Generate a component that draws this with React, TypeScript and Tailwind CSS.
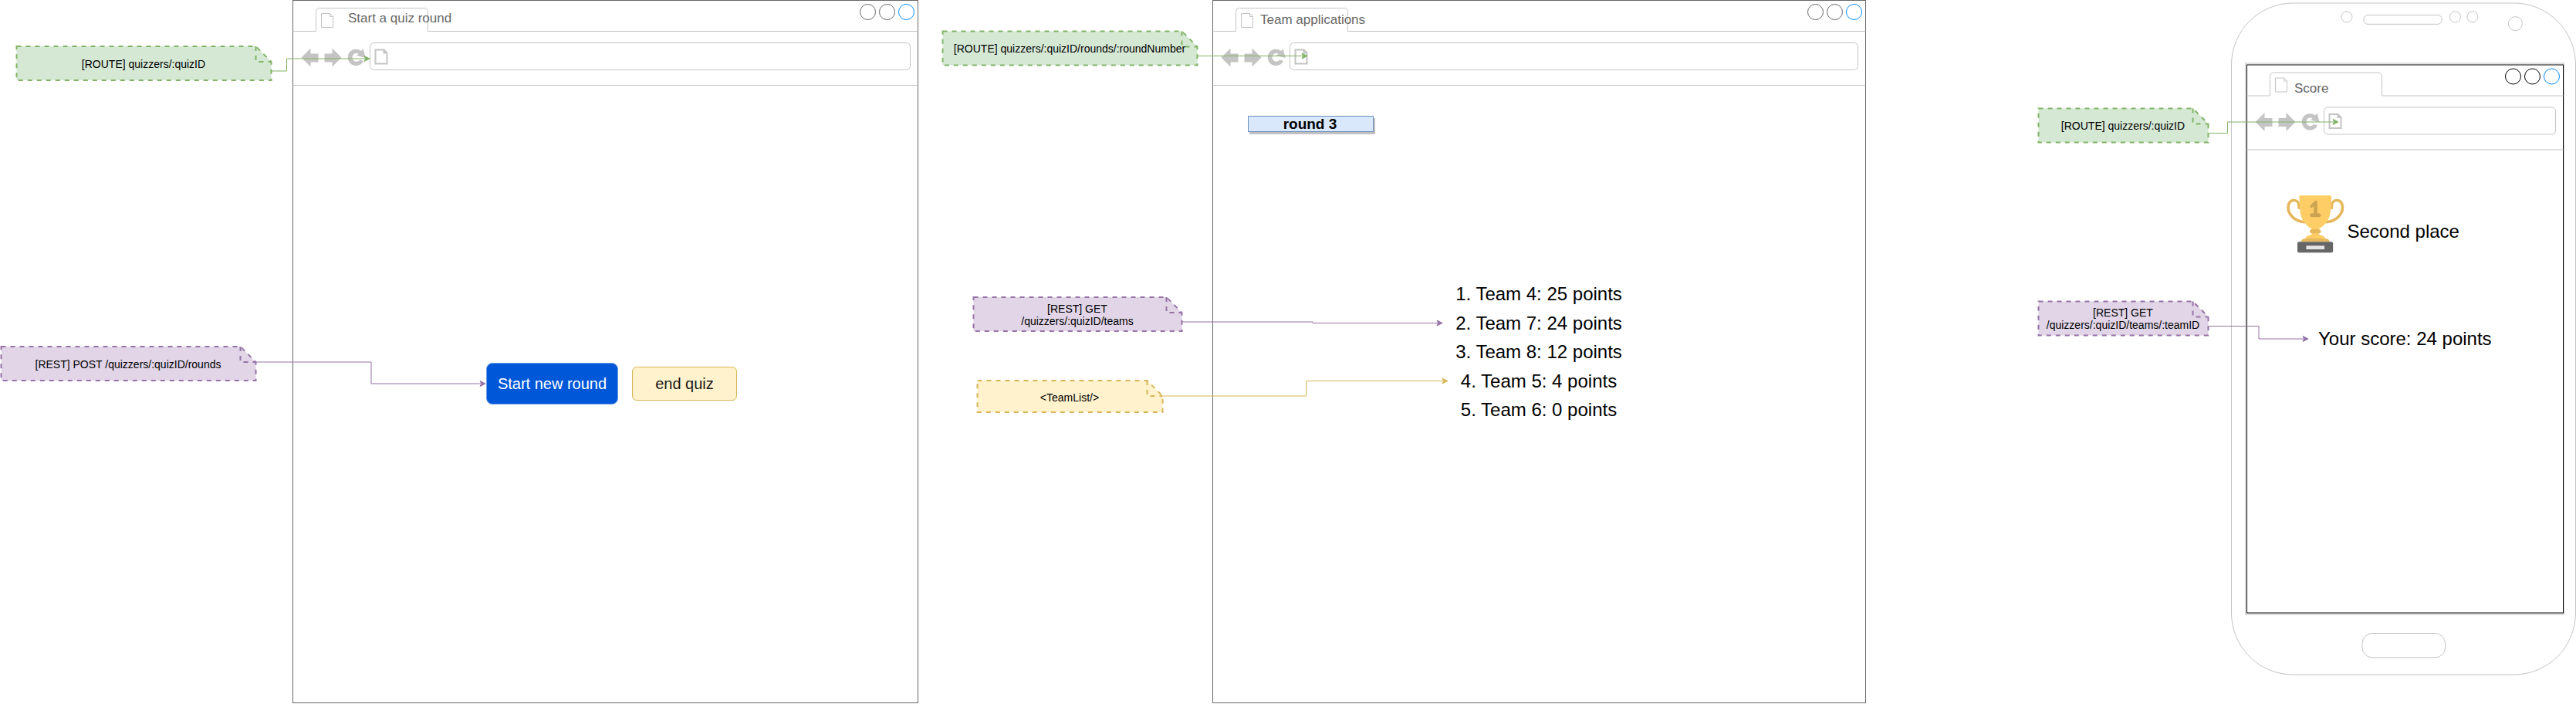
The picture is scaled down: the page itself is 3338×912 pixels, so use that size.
import React from "react";
import type { ReactNode } from "react";

type Tone = "green" | "purple" | "yellow";

const tones: Record<Tone, { fill: string; stroke: string }> = {
  green: { fill: "fill-[#d5e8d4]", stroke: "stroke-[#82b366]" },
  purple: { fill: "fill-[#e1d5e7]", stroke: "stroke-[#9673a6]" },
  yellow: { fill: "fill-[#fff2cc]", stroke: "stroke-[#d6b656]" },
};

const arrowFill: Record<Tone, string> = {
  green: "fill-[#82b366]",
  purple: "fill-[#9673a6]",
  yellow: "fill-[#d6b656]",
};

type NoteData = { x: number; y: number; w: number; h: number; tone: Tone; lines: string[]; half?: boolean };

/* Dashed annotation with a folded top-right corner, pinned on the canvas. */
function Note({ x, y, w, h, tone, lines, half }: NoteData) {
  const t = tones[tone];
  return (
    <div className="absolute flex items-center justify-center" style={{ left: x, top: y, width: w, height: h }}>
      <svg className="absolute inset-0 h-full w-full overflow-visible" aria-hidden="true">
        <g transform={half ? "translate(0.5 0.5)" : "translate(0.5 0)"} strokeWidth="2" strokeDasharray="6 6" className={t.stroke}>
          <path d={`M0 0H${w - 20}L${w} 20V${h}H0Z`} className={t.fill} />
          <path d={`M${w - 20} 0V20H${w}`} fill="none" />
        </g>
      </svg>
      <p className="relative pt-0.5 text-center text-[14px] leading-4">
        {lines.map((line) => (
          <span key={line} className="block">
            {line}
          </span>
        ))}
      </p>
    </div>
  );
}

const notes: NoteData[] = [
  { x: 21, y: 60, w: 330, h: 44, tone: "green", lines: ["[ROUTE] quizzers/:quizID"] },
  { x: 1, y: 449, w: 330, h: 44, tone: "purple", lines: ["[REST] POST /quizzers/:quizID/rounds"] },
  { x: 1221, y: 40, w: 330, h: 44, tone: "green", lines: ["[ROUTE] quizzers/:quizID/rounds/:roundNumber"], half: true },
  { x: 1261, y: 385, w: 270, h: 44, tone: "purple", lines: ["[REST] GET", "/quizzers/:quizID/teams"] },
  { x: 1266, y: 493, w: 240, h: 41, tone: "yellow", lines: ["<TeamList/>"] },
  { x: 2641, y: 140, w: 220, h: 44, tone: "green", lines: ["[ROUTE] quizzers/:quizID"], half: true },
  { x: 2641, y: 390, w: 220, h: 44, tone: "purple", lines: ["[REST] GET", "/quizzers/:quizID/teams/:teamID"], half: true },
];

/* Connector with a classic arrow head at its right end. */
function Connector({ d, tipX, tipY, tone }: { d: string; tipX: number; tipY: number; tone: Tone }) {
  return (
    <g className={tones[tone].stroke}>
      <path d={d} fill="none" />
      <path
        d={`M${tipX - 1} ${tipY}l-7 3.5l1.75 -3.5l-1.75 -3.5z`}
        className={arrowFill[tone]}
        strokeMiterlimit="10"
      />
    </g>
  );
}

/* Line drawing of a browser: tab, toolbar, address field and window buttons. */
function BrowserChrome({ w, h, dark }: { w: number; h: number; dark?: boolean }) {
  const edge = dark ? "stroke-black" : "stroke-[#666666]";
  return (
    <svg className="absolute inset-0 h-full w-full overflow-visible" fill="none" aria-hidden="true">
      <g transform={dark ? "translate(0.5 0)" : "translate(0.5 0.5)"}>
        <rect width={w} height={h} className={`fill-white ${edge}`} />
        <circle cx={w - 65} cy="15" r="10" className={edge} />
        <circle cx={w - 40} cy="15" r="10" className={edge} />
        <circle cx={w - 15} cy="15" r="10" className="stroke-[#008cff]" />
        <g className="stroke-[#c4c4c4]">
          <path d={`M0 40H30V15A5 5 0 0 1 35 10H170A5 5 0 0 1 175 15V40H${w}`} />
          <rect x="100" y="55" width={w - 110} height="35" rx="5" />
          <path d={`M0 110H${w}`} />
          <path d="M37 17H48L52 21V35H37ZM48 17V21H52" />
          <path d="M107 64H118L122 68V82H107ZM118 64V68H122" strokeWidth="2" />
        </g>
        <g className="fill-[#c4c4c4]">
          <path d="M11 74L23 62V69H33V80H23V86Z" />
          <path d="M41 69H51V62L63 74L51 86V80H41Z" />
          <path d="M91.5 78.5A10.7 10.7 0 1 1 88.5 65.5L91 62.5L94.2 74.5L82.5 71.5L85.2 69.2A5.4 5.4 0 1 0 86.8 77Z" />
        </g>
      </g>
    </svg>
  );
}

function WindowTitle({ className, children }: { className: string; children: ReactNode }) {
  return (
    <header className={`h-[110px] shrink-0 text-[17px] leading-none text-[#666666] ${className}`}>
      <h2>{children}</h2>
    </header>
  );
}

function Trophy() {
  return (
    <svg className="h-[74.5px] w-[74.5px] shrink-0" viewBox="69 38.5 223 223" aria-hidden="true">
      <g fill="none" stroke="#e6b85c" strokeWidth="11" strokeLinecap="round">
        <path d="M117 87V80C117 66 108 58 97 58C83 58 75 70 75 86C75 113 101 140 138 142" />
        <path d="M244 87V80C244 66 253 58 264 58C278 58 286 70 286 86C286 113 260 140 223 142" />
      </g>
      <path
        d="M118 43Q118 39 122 39H239Q243 39 243 43L240 98C238 128 222 151 194 169V190Q203 194 214 198L220 208H140L146 198Q158 194 167 190V169C139 151 123 128 121 98Z"
        fill="#ffcd66"
      />
      <rect x="159" y="170" width="43" height="16" rx="8" fill="#e6b85c" />
      <path d="M124 219Q128 206 143 206H218Q233 206 237 219Z" fill="#e6b85c" />
      <path
        d="M174 108V81L168 86Q162 89 160 83Q159 79 163 76L178 61Q181 58 185 59Q188 60 188 65V108H194Q202 109 202 115.500Q202 123 194 123H168Q159 123 159 115.500Q159 108 168 108Z"
        fill="#cca352"
      />
      <rect x="111" y="219" width="138" height="42" rx="6" fill="#666666" />
      <rect x="145" y="234" width="71" height="14" fill="#e6e6e6" />
    </svg>
  );
}

function PhoneOutline() {
  return (
    <svg className="absolute inset-0 h-full w-full" viewBox="2880 0 458 912" fill="none" stroke="#c4c4c4" aria-hidden="true">
      <rect x="2891.5" y="4" width="446" height="870" rx="80" />
      <rect x="2909.7" y="82" width="412.6" height="714" />
      <circle cx="3040.9" cy="21.8" r="7" />
      <rect x="3063" y="19.5" width="101" height="11.8" rx="5" />
      <circle cx="3181.4" cy="21.8" r="7" />
      <circle cx="3203.9" cy="21.8" r="7" />
      <circle cx="3259.4" cy="30.6" r="9" />
      <rect x="3061" y="820.5" width="107.5" height="31.3" rx="13" />
    </svg>
  );
}

const standings = [
  "1. Team 4: 25 points",
  "2. Team 7: 24 points",
  "3. Team 8: 12 points",
  "4. Team 5: 4 points",
  "5. Team 6: 0 points",
];

export default function App() {
  return (
    <main className="relative flex h-[912px] w-[3338px] items-start overflow-hidden bg-white pl-[379px] font-['Liberation_Sans',Arial,sans-serif] whitespace-nowrap text-black">
      <section className="relative h-[911px] w-[811px] shrink-0">
        <BrowserChrome w={810} h={910} />
        <div className="relative flex h-full flex-col">
          <WindowTitle className="pt-[15px] pl-[72px]">Start a quiz round</WindowTitle>
          <div className="flex items-center gap-[18px] pt-[360px] pl-[251px]">
            <button className="flex h-[54px] w-[171px] items-center justify-center rounded-lg border border-[#6b9be6] bg-[#0057d8] text-[20px] leading-none text-white">
              Start new round
            </button>
            <button className="flex h-11 w-[136px] items-center justify-center rounded-md border border-[#d6b656] bg-[#fff2cc] text-[20px] leading-none text-[#1a1a1a]">
              end quiz
            </button>
          </div>
        </div>
      </section>

      <section className="relative ml-[381px] h-[911px] w-[847px] shrink-0">
        <BrowserChrome w={846} h={910} />
        <div className="relative flex h-full flex-col items-start">
          <WindowTitle className="pt-[17px] pl-[62px]">Team applications</WindowTitle>
          <div className="mt-10 ml-[46px] flex h-[21px] w-[163px] items-center justify-center border border-[#6c8ebf] bg-[#dae8fc] pr-0.5 text-[19px] leading-none font-bold shadow-[2px_3px_0_#c0c0c0]">
            round 3
          </div>
          <ol className="mt-[191px] ml-[273px] flex w-[300px] flex-col items-center text-[24px] leading-[37.5px]">
            {standings.map((row) => (
              <li key={row}>{row}</li>
            ))}
          </ol>
        </div>
      </section>

      <section className="relative ml-[462px] h-[912px] w-[458px] shrink-0 pt-[84px] pl-[31px]">
        <PhoneOutline />
        <div className="relative h-[710px] w-[411px]">
          <BrowserChrome w={410} h={710} dark />
          <div className="relative flex h-full flex-col">
            <WindowTitle className="pt-[22px] pl-[62px]">Score</WindowTitle>
            <div className="flex h-[75px] shrink-0 items-center gap-1 mt-[59px] pl-[52px] text-[24px] leading-none">
              <Trophy />
              <p className="pt-[19px]">Second place</p>
            </div>
            <p className="mt-[99px] pl-[93px] text-[24px] leading-none">Your score: 24 points</p>
          </div>
        </div>
      </section>

      {notes.map((note) => (
        <Note key={`${note.x}-${note.y}`} {...note} />
      ))}

      <svg className="pointer-events-none absolute inset-0" width="3338" height="912" aria-hidden="true">
        <Connector tone="green" d="M351.5 92H371.5V76H473" tipX={480} tipY={76} />
        <Connector tone="purple" d="M331.5 469H481V497H623" tipX={630} tipY={497} />
        <Connector tone="green" d="M1551.5 72.5H1688" tipX={1695} tipY={72.5} />
        <Connector tone="purple" d="M1531.5 417H1701V418.5H1863" tipX={1870} tipY={418.5} />
        <Connector tone="yellow" d="M1506.5 513H1692.5V493.5H1870" tipX={1877} tipY={493.5} />
        <Connector tone="green" d="M2861.5 172.5H2886.5V158H3024" tipX={3031} tipY={158} />
        <Connector tone="purple" d="M2861.5 422.5H2927V439H2985" tipX={2992} tipY={439} />
      </svg>
    </main>
  );
}
